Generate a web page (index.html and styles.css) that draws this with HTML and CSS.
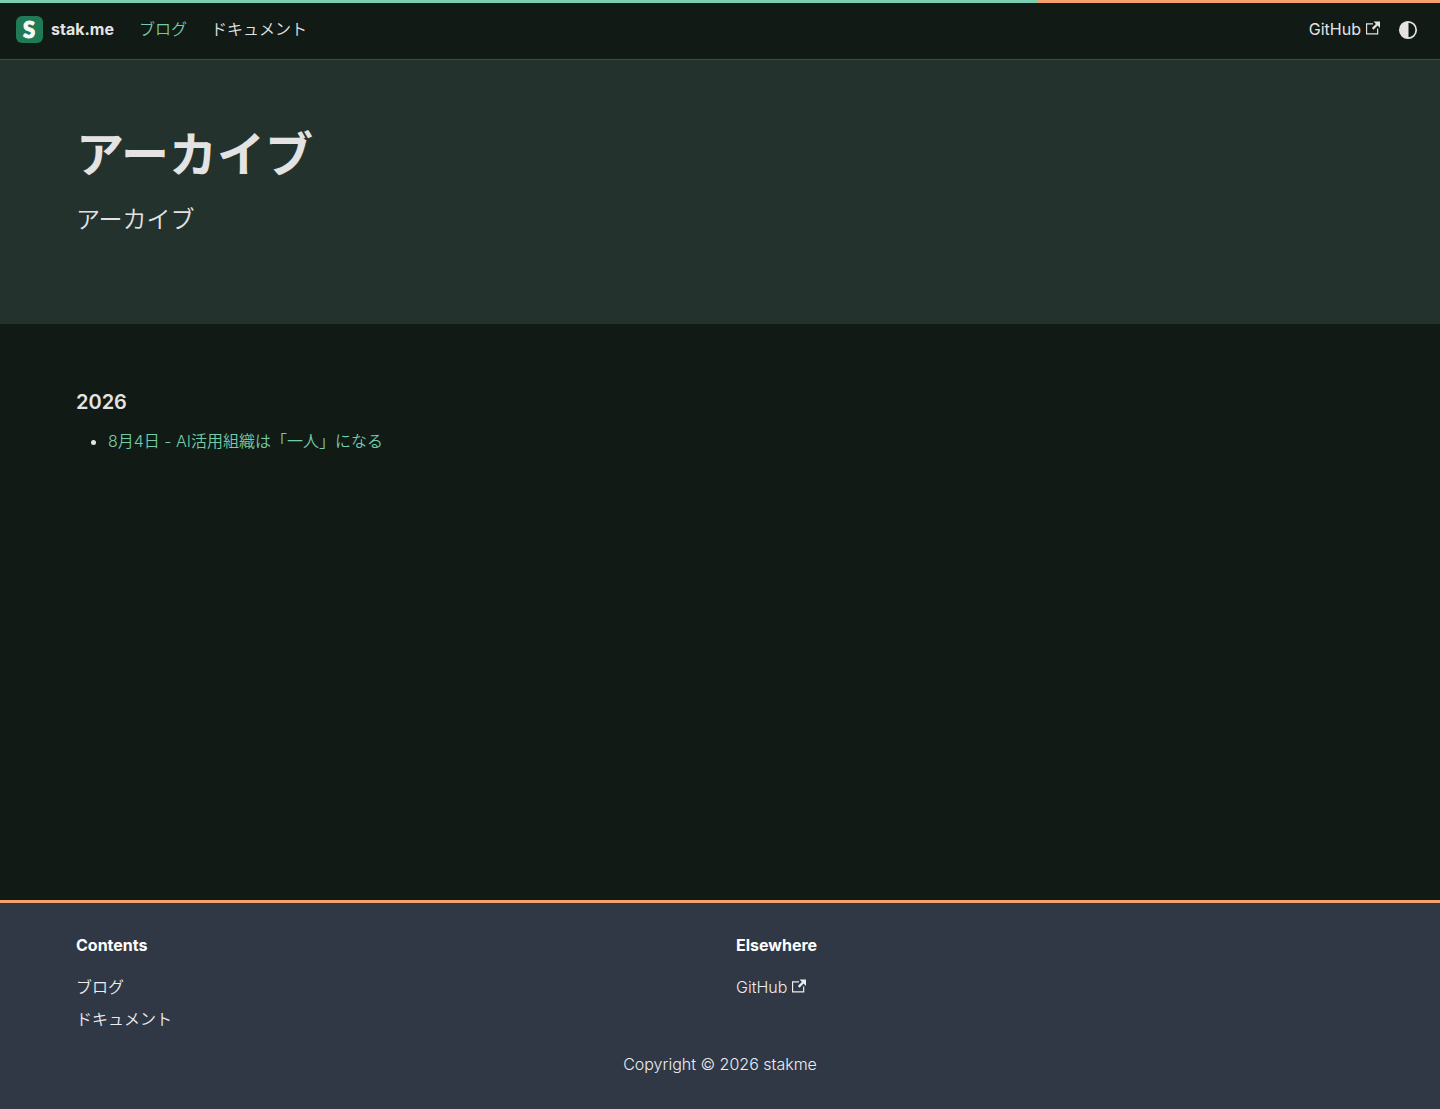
FILE: index.html
```html
<!DOCTYPE html>
<html lang="ja">
<head>
  <meta charset="UTF-8">
  <meta name="viewport" content="width=device-width, initial-scale=1.0">
  <title>アーカイブ | stak.me</title>
  <link rel="stylesheet" href="styles.css">
</head>
<body>
  <nav class="navbar" aria-label="Main">
    <div class="navbar-items">
      <a class="navbar-brand" href="/">
        <svg class="navbar-logo" viewBox="0 0 27 27" aria-hidden="true">
          <rect width="27" height="27" rx="6" fill="#1f7a55"/>
          <text x="13" y="21.5" text-anchor="middle" class="logo-letter">S</text>
        </svg>
        <b class="navbar-title">stak.me</b>
      </a>
      <a class="navbar-link navbar-link-active" href="/blog">ブログ</a>
      <a class="navbar-link navbar-link-ja" href="/docs">ドキュメント</a>
    </div>
    <div class="navbar-items">
      <a class="navbar-link" href="https://github.com/stakme">GitHub<svg class="external-icon" viewBox="0 0 24 24" aria-hidden="true"><path fill="currentColor" d="M21 13v10h-21v-19h12v2h-10v15h17v-8h2zm3-12h-10.988l4.035 4-6.977 7.07 2.828 2.828 6.977-7.07 4.125 4.172v-11z"/></svg></a>
      <button class="theme-toggle" type="button" aria-label="Toggle theme">
        <svg viewBox="0 0 24 24" width="24" height="24" aria-hidden="true">
          <circle cx="12" cy="12" r="8.2" fill="none" stroke="currentColor" stroke-width="1.7"/>
          <path fill="currentColor" d="M12.5 3.5a8.5 8.5 0 1 0 0 17z"/>
        </svg>
      </button>
    </div>
  </nav>

  <header class="hero">
    <div class="container">
      <h1 class="hero-title">アーカイブ</h1>
      <p class="hero-subtitle">アーカイブ</p>
    </div>
  </header>

  <main class="archive">
    <div class="container">
      <h3 class="archive-year">2026</h3>
      <ul class="archive-list">
        <li><a href="/blog/ai-organization">8月4日 - AI活用組織は「一人」になる</a></li>
      </ul>
    </div>
  </main>

  <footer class="footer">
    <div class="container">
      <div class="footer-columns">
        <div class="footer-column">
          <div class="footer-title">Contents</div>
          <ul class="footer-list">
            <li><a href="/blog">ブログ</a></li>
            <li><a href="/docs">ドキュメント</a></li>
          </ul>
        </div>
        <div class="footer-column">
          <div class="footer-title">Elsewhere</div>
          <ul class="footer-list">
            <li><a href="https://github.com/stakme">GitHub<svg class="external-icon" viewBox="0 0 24 24" aria-hidden="true"><path fill="currentColor" d="M21 13v10h-21v-19h12v2h-10v15h17v-8h2zm3-12h-10.988l4.035 4-6.977 7.07 2.828 2.828 6.977-7.07 4.125 4.172v-11z"/></svg></a></li>
          </ul>
        </div>
      </div>
      <div class="footer-copyright">Copyright © 2026 stakme</div>
    </div>
  </footer>
</body>
</html>
```
FILE: styles.css
```css
* {
  box-sizing: border-box;
}

html {
  height: 100%;
}

body {
  display: flex;
  flex-direction: column;
  min-height: 100%;
  margin: 0;
  font-family: Inter, "Noto Sans CJK JP", sans-serif;
  font-size: 16px;
  line-height: 26px;
  color: #e3e3e3;
  background-color: #121a16;
}

a {
  color: inherit;
  text-decoration: none;
}

.container {
  width: 100%;
  max-width: 1320px;
  margin: 0 auto;
  padding: 0 16px;
}

.external-icon {
  width: 14px;
  height: 14px;
  margin-left: 5px;
}

/* Navbar */
.navbar {
  display: flex;
  justify-content: space-between;
  height: 60px;
  padding: 0 16px;
  background: linear-gradient(90deg, #7bcfb0 72%, #f4a26b 72%) top / 100% 3px no-repeat;
  border-bottom: 1px solid #444950;
}

.navbar-items {
  display: flex;
  align-items: center;
}

.navbar-brand {
  display: flex;
  align-items: center;
  gap: 8px;
  margin-right: 13px;
}

.navbar-title {
  padding-bottom: 2px;
}

.navbar-logo {
  width: 27px;
  height: 27px;
}

.logo-letter {
  font-family: Lato, sans-serif;
  font-size: 22px;
  font-weight: 900;
  fill: #f7faf5;
  stroke: #f7faf5;
  stroke-width: 1px;
}

.navbar-link {
  padding: 0 12px 2px;
}

.navbar-link-active,
.navbar-link-ja {
  font-weight: 350;
}

.navbar-link-active {
  color: #72cca9;
}

.theme-toggle {
  display: flex;
  align-items: center;
  justify-content: center;
  width: 32px;
  height: 32px;
  padding: 0;
  border: none;
  border-radius: 50%;
  color: inherit;
  background: none;
  cursor: pointer;
}

/* Hero */
.hero {
  padding: 64px 0;
  background-color: #23322d;
}

.hero-title {
  margin: 0 0 16px;
  font-size: 48px;
  line-height: 62px;
}

.hero-subtitle {
  margin: 0 0 22px;
  font-size: 24px;
  font-weight: 350;
  line-height: 36px;
}

/* Archive */
.archive {
  flex: 1;
  padding: 64px 0;
}

.archive-year {
  margin: 0 0 12px;
  font-size: 20px;
  font-weight: 600;
  line-height: 28px;
}

.archive-list {
  margin: 0;
  padding-left: 32px;
}

.archive-list a {
  font-weight: 350;
  color: #72cca9;
}

/* Footer */
.footer {
  padding: 32px 0;
  color: #ebedf0;
  background-color: #303846;
  border-top: 3px solid #f4a26b;
}

.footer-columns {
  display: flex;
  gap: 32px;
  margin-bottom: 16px;
}

.footer-column {
  flex: 1;
}

.footer-title {
  margin-bottom: 16px;
  font-weight: 700;
  line-height: 20px;
  color: #fff;
}

.footer-list {
  margin: 0;
  padding: 0;
  font-weight: 350;
  line-height: 32px;
  list-style: none;
}

.footer-copyright {
  font-weight: 350;
  text-align: center;
}
```
